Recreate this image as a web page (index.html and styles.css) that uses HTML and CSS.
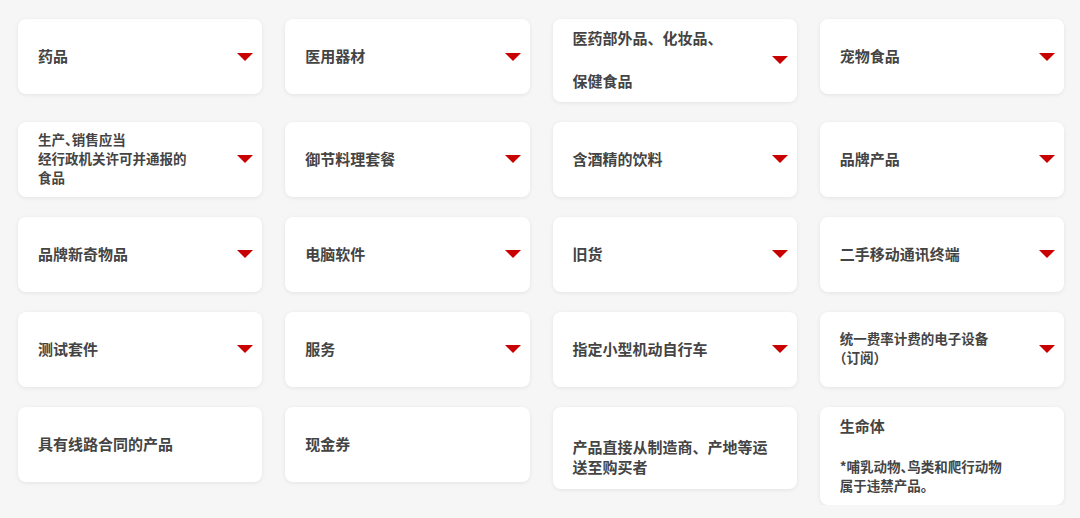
FILE: index.html
```html
<!DOCTYPE html>
<html lang="zh-CN">
    <head>
        <meta charset="UTF-8" />
        <meta name="viewport" content="width=device-width, initial-scale=1.0" />
        <title>禁止出品的商品</title>
        <link rel="stylesheet" href="styles.css">
    </head>
    <body>
        <div class="grid">
            <div class="card">
                <div class="label">药品</div>
                <span class="arrow"></span>
            </div>
            <div class="card">
                <div class="label">医用器材</div>
                <span class="arrow"></span>
            </div>
            <div class="card">
                <div class="label loose">医药部外品、化妆品、<br /><br />保健食品</div>
                <span class="arrow"></span>
            </div>
            <div class="card">
                <div class="label">宠物食品</div>
                <span class="arrow"></span>
            </div>

            <div class="card">
                <div class="label small">生产、销售应当<br />经行政机关许可并通报的<br />食品</div>
                <span class="arrow"></span>
            </div>
            <div class="card">
                <div class="label">御节料理套餐</div>
                <span class="arrow"></span>
            </div>
            <div class="card">
                <div class="label">含酒精的饮料</div>
                <span class="arrow"></span>
            </div>
            <div class="card">
                <div class="label">品牌产品</div>
                <span class="arrow"></span>
            </div>

            <div class="card">
                <div class="label">品牌新奇物品</div>
                <span class="arrow"></span>
            </div>
            <div class="card">
                <div class="label">电脑软件</div>
                <span class="arrow"></span>
            </div>
            <div class="card">
                <div class="label">旧货</div>
                <span class="arrow"></span>
            </div>
            <div class="card">
                <div class="label">二手移动通讯终端</div>
                <span class="arrow"></span>
            </div>

            <div class="card">
                <div class="label">测试套件</div>
                <span class="arrow"></span>
            </div>
            <div class="card">
                <div class="label">服务</div>
                <span class="arrow"></span>
            </div>
            <div class="card">
                <div class="label">指定小型机动自行车</div>
                <span class="arrow"></span>
            </div>
            <div class="card">
                <div class="label small">统一费率计费的电子设备<br />（订阅）</div>
                <span class="arrow"></span>
            </div>

            <div class="card">
                <div class="label">具有线路合同的产品</div>
            </div>
            <div class="card">
                <div class="label">现金券</div>
            </div>
            <div class="card tall">
                <div class="label lined"><br />产品直接从制造商、产地等运<br />送至购买者</div>
            </div>
            <div class="card tall">
                <div class="label">
                    <div class="title">生命体</div>
                    <div class="gap"></div>
                    <div class="note">*哺乳动物、鸟类和爬行动物<br />属于违禁产品。</div>
                </div>
            </div>
        </div>
    </body>
</html>
```

FILE: styles.css
```css
body {
    margin: 0;
    padding: 0;
    background-color: #f6f6f6;
    font-family: "Noto Sans CJK SC", "Noto Sans", sans-serif;
    color: #444;
}
.grid {
    display: grid;
    grid-template-columns: repeat(4, 1fr);
    column-gap: 23px;
    row-gap: 20px;
    align-items: start;
    padding: 19px 16px 0 18px;
}
.card {
    display: flex;
    align-items: center;
    min-height: 75px;
    box-sizing: border-box;
    padding: 9px 9px 9px 20px;
    background-color: #fff;
    border-radius: 8px;
    box-shadow: 0 1px 4px rgba(0, 0, 0, 0.08);
}
.label {
    flex: 1;
    font-size: 15px;
    font-weight: 700;
    line-height: 21px;
    transform: translateY(-1.5px);
}
.label.loose {
    line-height: 21.5px;
}
.label.lined {
    line-height: 20px;
    padding: 2px 0;
}
.label.small,
.note {
    font-size: 13.5px;
    line-height: 19px;
    font-feature-settings: "halt";
}
.gap {
    height: 21px;
}
.arrow {
    flex: none;
    width: 0;
    height: 0;
    border-left: 8.5px solid transparent;
    border-right: 8.5px solid transparent;
    border-top: 8px solid #c80000;
}
```
